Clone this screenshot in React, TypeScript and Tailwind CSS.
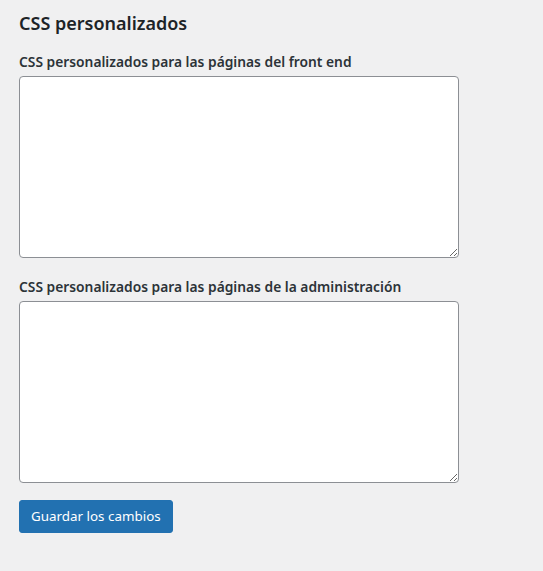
const fields = [
  { id: "front", label: "CSS personalizados para las páginas del front end", gap: "mb-[19px]" },
  { id: "admin", label: "CSS personalizados para las páginas de la administración", gap: "mb-[17px]" },
];

export default function App() {
  return (
    <div
      className="min-h-[571px] bg-[#f0f0f1] px-[19px] pt-[11px] text-[#1d2327]"
      style={{ fontFamily: '"Noto Sans", "Open Sans", sans-serif' }}
    >
      {/* Section title */}
      <h2 className="text-[18px] font-semibold leading-[24px] mb-[17px]">CSS personalizados</h2>

      {fields.map((f) => (
        <div key={f.id} className={f.gap}>
          <label htmlFor={f.id} className="block text-[13.8px] font-semibold leading-[20px] mb-[4px] text-[#2c3338]">
            {f.label}
          </label>
          <textarea
            id={f.id}
            className="block w-[440px] h-[182px] bg-white border border-[#8c8f94] rounded-[4px] outline-none"
          />
        </div>
      ))}

      <button className="h-[33px] px-[11px] bg-[#2271b1] text-white text-[13.4px] rounded-[3px] border border-[#2271b1]">
        Guardar los cambios
      </button>
    </div>
  );
}
